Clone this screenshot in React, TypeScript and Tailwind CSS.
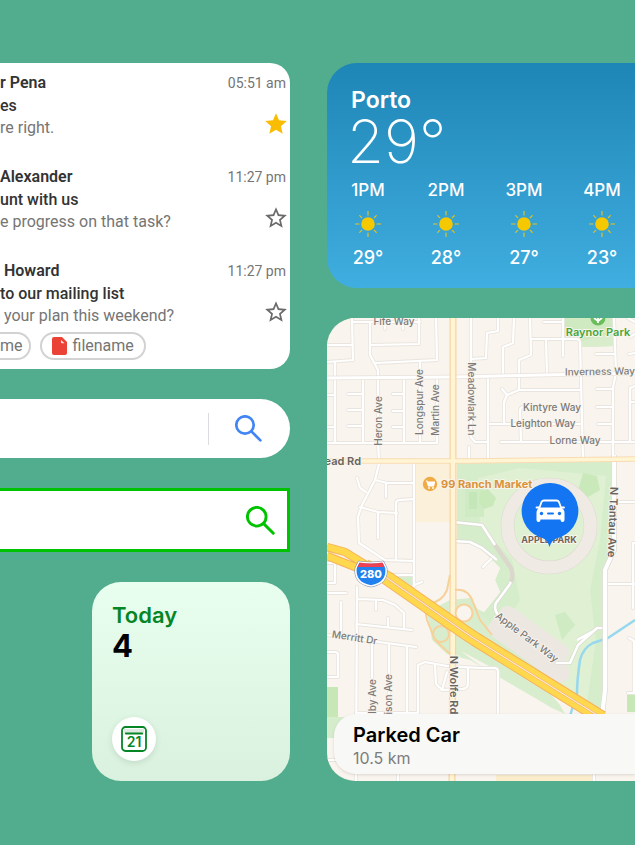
import React from 'react';

const mails = [
  { name: 'r Pena', subject: 'es', body: 're right.', time: '05:51 am', starred: true },
  { name: 'Alexander', subject: 'unt with us', body: 'e progress on that task?', time: '11:27 pm', starred: false },
  { name: '\u00a0Howard', subject: 'to our mailing list', body: '\u00a0your plan this weekend?', time: '11:27 pm', starred: false },
];

const hours = [
  { time: '1PM', temp: '29°' },
  { time: '2PM', temp: '28°' },
  { time: '3PM', temp: '27°' },
  { time: '4PM', temp: '23°' },
];

function Star({ filled }: { filled: boolean }) {
  return filled ? (
    <svg viewBox="0 0 24 24" className="size-[26px]" fill="#fbbc04">
      <path d="M12 17.27 18.18 21l-1.64-7.03L22 9.24l-7.19-.61L12 2 9.19 8.63 2 9.24l5.46 4.73L5.82 21z" />
    </svg>
  ) : (
    <svg viewBox="0 0 24 24" className="size-[26px]" fill="#6b6b6b">
      <path d="m22 9.24-7.19-.62L12 2 9.19 8.63 2 9.24l5.46 4.73L5.82 21 12 17.27 18.18 21l-1.63-7.03zM12 15.4l-3.76 2.27 1-4.28-3.32-2.88 4.38-.38L12 6.1l1.71 4.04 4.38.38-3.32 2.88 1 4.28z" />
    </svg>
  );
}

function MailCard() {
  return (
    <section className="overflow-hidden rounded-r-[20px] bg-white pt-2 pb-[9px] font-['Roboto',sans-serif] text-[#757575]">
      <ul className="flex flex-col gap-[26px]">
        {mails.map((m) => (
          <li key={m.name} className="flex justify-between whitespace-nowrap pr-1">
            <div className="text-base leading-[22px]">
              <h3 className="leading-6 font-semibold text-[#333333]">{m.name}</h3>
              <p className="font-medium text-[#333333]">{m.subject}</p>
              <p>{m.body}</p>
            </div>
            <div className="flex flex-col items-end">
              <time className="text-sm leading-6">{m.time}</time>
              <button aria-label="Star" className="-mr-[3px] mt-4">
                <Star filled={m.starred} />
              </button>
            </div>
          </li>
        ))}
      </ul>
      <div className="mt-[5px] flex gap-[9px] text-base">
        <button className="h-7 rounded-r-full border-2 border-l-0 border-[#d2d2d2] pr-[6px] leading-6">me</button>
        <button className="flex h-7 items-center gap-[6px] rounded-full border-2 border-[#d2d2d2] px-[10px] leading-6">
          <svg viewBox="0 0 15 18" className="h-[18px] w-[15px]">
            <path d="M2 0h8l5 5v11a2 2 0 0 1-2 2H2a2 2 0 0 1-2-2V2a2 2 0 0 1 2-2z" fill="#ea4335" />
            <path d="M9 3l3.500 3.200H10a1 1 0 0 1-1-1z" fill="#fff" opacity=".85" />
          </svg>
          filename
        </button>
      </div>
    </section>
  );
}

function SearchIcon({ className }: { className: string }) {
  return (
    <svg viewBox="0 0 27 27" className={className} fill="none" stroke="currentColor" strokeWidth="2.7" strokeLinecap="round">
      <circle cx="10" cy="10" r="8.7" />
      <path d="M16.4 16.4 25.4 25.4" />
    </svg>
  );
}

function TodayCard() {
  return (
    <section className="ml-[92px] flex h-[199px] flex-col items-start justify-between rounded-[29px] bg-linear-to-b from-[#e8ffef] to-[#daf1df] p-5">
      <div>
        <h2 className="text-[22px] leading-[26px] font-semibold text-[#068527]">Today</h2>
        <p className="text-[31px] leading-9 font-bold text-black">4</p>
      </div>
      <div className="flex size-11 items-center justify-center rounded-full bg-white shadow-[0_2px_6px_rgba(0,60,20,0.12)]">
        <svg viewBox="0 0 26 26" className="size-[26px]">
          <rect x="1" y="1" width="24" height="24" rx="3.5" fill="#fff" stroke="#068527" strokeWidth="1.8" />
          <path d="M3 3h20v4H3z" fill="#e0e8e2" />
          <path d="M4.8 7.5h16.4" stroke="#068527" strokeWidth="1.8" strokeLinecap="round" />
          <text x="13" y="21" textAnchor="middle" fontSize="14" fontWeight="600" fill="#068527">21</text>
        </svg>
      </div>
    </section>
  );
}

function Sun() {
  return (
    <svg viewBox="-13 -13 26 26" className="size-[26px]">
      <circle r="6.8" fill="#f5c800" />
      <path
        d="M0-12.5V-9M0 12.5V9M-12.5 0H-9M12.5 0H9M-8.3-8.3-6.3-6.3M8.3-8.3 6.3-6.3M-8.3 8.3-6.3 6.3M8.3 8.3 6.3 6.3"
        stroke="#dfc22a"
        strokeWidth="1.2"
        strokeLinecap="round"
      />
    </svg>
  );
}

function WeatherCard() {
  return (
    <section className="h-[225px] overflow-hidden rounded-l-[30px] bg-linear-to-b from-[#1d86b6] to-[#40aee0] pt-6 text-white">
      <h2 className="pl-6 text-[23px] leading-[26px] font-semibold">Porto</h2>
      <p className="pl-5 text-[60px] leading-[56px] font-extralight">29°</p>
      <ul className="mt-[9px] flex pl-[2px]">
        {hours.map((h) => (
          <li key={h.time} className="flex w-[78px] shrink-0 flex-col items-center leading-6 font-medium">
            <span className="text-[17px]">{h.time}</span>
            <span className="my-[9px]">
              <Sun />
            </span>
            <span className="text-[18px]">{h.temp}</span>
          </li>
        ))}
      </ul>
    </section>
  );
}

const streets = [
  'M352 322H420M352 318 353 360 327 362M327 345H353M370 323V355L378 370V443L379 460',
  'M370 345 419 344V318M376 363 437 360 436 318M385 322V329M403 322V329',
  'M335 362V443M363 378V443M404 378V443M420 361V442M437 378V443H327',
  'M348 394H363M348 410H363M348 426H363M393 394H404M393 411H404M393 427H404M327 395H335M327 427H335',
  'M471 318V437L475 442H487M471 359 486 358 487 333 498 331V318M469 447V460',
  'M514 318 513 343 503 347V374M530 318 531 355 519 360V390H581M531 339H576Q580 339 580 343L583 459',
  'M546 339 547 374M563 318V356M544 322H563M519 390 507 395 504 402V424M507 395 502 389',
  'M488 424H582M488 376V459M535 407H524Q520 407 520 411L521 442M501 442H635',
  'M614 318 616 373 613 387V460M596 354H615M597 389H613M597 407H613M598 424H613',
  'M635 386 630 388V441M630 402H635M629 354 635 353M630 337 635 334M628 318 635 322',
  'M414 461V586M380 460 375 480 362 505 358 517 359 543 385 560 414 561M357 478 360 488 366 492',
  'M375 480 387 483H414M386 483V497M360 507 378 512 397 513M378 512V538M414 499 400 500Q396 500 396 504V560',
  'M394 575H414M414 585 422 582M327 563H335V583H327M327 593H346M341 602V632',
  'M357 587 356 781M357 599 383 600 395 605 404 613V628M376 600V610M356 624 412 630M388 618V627',
  'M327 635 416 647M372 643V713M389 645V713M407 646V713M356 713H418',
  'M418 713V665L425 662 447 666 480 668H494Q498 668 498 672V713M435 665 436 684 442 690 462 689Q468 689 468 683V668M447 672 442 690',
  'M327 652H335Q338 652 338 655V677H327M327 760H356M398 775V781M594 775V781',
  'M618 502H635M607 584H635M635 543H633V608M629 638 634 641V693H628M483 567 494 556',
];

const mapLabel = 'fill-[#7c7b79] text-[10px] font-medium';
const mapRoadLabel = 'fill-[#68655f] text-[11px] font-semibold';

function MapDrawing() {
  return (
    <svg
      viewBox="327 318 308 463"
      preserveAspectRatio="xMinYMin slice"
      className="absolute inset-0 size-full"
      strokeLinejoin="round"
      fill="none"
    >
      <rect x="327" y="318" width="900" height="463" fill="#f9f4ed" />
      <path d="M564 318H614V346L581 347 580 341 564 338Z" fill="#cfe9c0" />
      <path d="M580 341 614 333V346L581 347Z" fill="#d9edcc" />
      <path d="M414 462H453V522H414Z" fill="#fbf1da" />
      <path d="M457 462H614V550L605 570V716L500 650 453 620 457 600 484 612 500 592 495 580 500 568 480 548 457 541Z" fill="#d6edcc" />
      <path d="M478 478 520 468 606 476 600 540 590 590 596 640 585 716 520 650 505 625 520 600 512 560 480 525Z" fill="#dff0d3" />
      <path d="M465 485H484V517H465Z" fill="#cfebc4" />
      <path d="M469 492H477V509H469Z" fill="#c5e6b8" />
      <path d="M480 492 488 489 496 498 493 506 484 509 479 503Z" fill="#c9e9bb" />
      <path d="M583 473 597 476 600 490 588 497 578 491Z" fill="#c9e9bb" />
      <path d="M555 615 565 612 575 625 562 640Z" fill="#cfebc4" />
      <path d="M457 541 470 542 480 548 500 568 495 580 500 592 484 612 457 600Z" fill="#f9f4ed" />
      <path d="M394 577 414 575V590L404 590Z" fill="#d6edcc" />
      <path d="M427 612 450 600 470 598 480 612 560 705 565 714 552 708 470 660 447 654 432 640Z" fill="#d8edcd" />
      <path d="M461 651 500 672 500 713 545 713 470 658Z" fill="#f9f4ed" />
      <path d="M327 687H338V717H327Z" fill="#c8e7b6" />
      <path d="M327 717H345V738H327Z" fill="#d6edcc" />
      <path d="M627 695H635V712H627Z" fill="#c8e7b6" />
      <path d="M496 775H592V781H496Z" fill="#fbeccb" />
      <path d="M635 620 608 638 593 643Q583 648 580 660 577 680 577 693L570 716" stroke="#97d8ef" strokeWidth="2.5" />

      <circle cx="549" cy="526" r="41.5" stroke="#ded9d0" strokeWidth="13.5" />
      <circle cx="549" cy="526" r="41.5" stroke="#efebe4" strokeWidth="12.5" />
      <path d="M497 614 503 607Q509 604 515 609L566 646Q572 651 568 657L563 663Q573 670 569 678 563 685 555 681L492 636Q485 631 490 623Z" fill="#ece8e1" />

      {streets.map((d) => (
        <path key={d} d={d} stroke="#e9e5de" strokeWidth="3.8" strokeLinecap="round" />
      ))}
      {streets.map((d) => (
        <path key={d} d={d} stroke="#ffffff" strokeWidth="2.2" strokeLinecap="round" />
      ))}
      <path d="M327 378 453 377 635 373" stroke="#e6e1da" strokeWidth="4.5" />
      <path d="M327 378 453 377 635 373" stroke="#fff" strokeWidth="3" />

      <path d="M453 522 482 525 495 545 511 568Q514 576 510 584L496 603Q493 610 500 617M453 541 470 542 482 548 497 560M556 663H570L578 645 597 628H605M577 640 592 632" stroke="#d9d8cf" strokeWidth="4" />
      <path d="M453 522 482 525 495 545 511 568Q514 576 510 584L496 603Q493 610 500 617M453 541 470 542 482 548 497 560M556 663H570L578 645 597 628H605M577 640 592 632" stroke="#fff" strokeWidth="2.6" />
      <path d="M495 545 511 568Q514 576 511 582" stroke="#dcd7cd" strokeWidth="4" />
      <path d="M614 455V550L605 570V690L602 716" stroke="#dedad2" strokeWidth="5.5" />
      <path d="M614 455V550L605 570V690L602 716" stroke="#fff" strokeWidth="4.2" />

      <path d="M327 461 470 461 635 459" stroke="#f8dbb4" strokeWidth="5.5" />
      <path d="M453 318V590L452 781" stroke="#f8d3a4" strokeWidth="7" />
      <path d="M327 461 470 461 635 459" stroke="#fff5d2" strokeWidth="3.5" />
      <path d="M453 318V590L452 781" stroke="#fff5d2" strokeWidth="4.5" />

      <g stroke="#f6d199" strokeWidth="2">
        <path d="M450 575 447 590Q442 602 430 603L424 602 427 620 435 640 450 654M455 590Q468 588 473 602L480 620 492 635" />
        <circle cx="441" cy="634" r="8" />
        <circle cx="464" cy="613" r="8.5" fill="#f9f4ed" />
      </g>

      <path d="M327 547 345 552 371 568M327 556 350 565 387 579" stroke="#f6b25c" strokeWidth="8.5" />
      <path d="M327 547 345 552 371 568M327 556 350 565 387 579" stroke="#ffd84e" strokeWidth="6.5" />
      <path d="M365 566 387 578 463 631 475 639 602 718" stroke="#f6b25c" strokeWidth="14.5" />
      <path d="M365 566 387 578 463 631 475 639 602 718" stroke="#ffd84e" strokeWidth="12.5" />
      <path d="M365 566 387 578 463 631 475 639 602 718" stroke="#f4b877" strokeWidth="2.2" />
      <path d="M365 566 387 578 463 631 475 639 602 718" stroke="#fdf1e4" strokeWidth="1" />

      <g>
        <path d="M359 562Q370 564 383 562L386 568Q388 583 371 586 354 583 356 568Z" fill="#2a83ec" stroke="#7588a8" strokeWidth="2.5" />
        <path d="M359 562Q370 564 383 562L386 568Q388 583 371 586 354 583 356 568Z" fill="#2181ee" stroke="#fff" strokeWidth="1.5" />
        <path d="M359.5 562.5Q371 564.5 382.5 562.5L384.5 567H357.5Z" fill="#ec4253" />
        <text x="371" y="578" textAnchor="middle" className="fill-white text-[11px] font-extrabold">280</text>
      </g>

      <g textAnchor="middle" stroke="#f9f4ed" strokeWidth="2" paintOrder="stroke">
        <text x="394" y="325" className={mapLabel}>Fife Way</text>
        <text x="600" y="375" transform="rotate(-1 600 372)" className={mapLabel}>Inverness Way</text>
        <text x="552" y="411" className={mapLabel}>Kintyre Way</text>
        <text x="543" y="427" className={mapLabel}>Leighton Way</text>
        <text x="575" y="444" className={mapLabel}>Lorne Way</text>
        <text transform="translate(382 421) rotate(-90)" className={mapLabel}>Heron Ave</text>
        <text transform="translate(423 402) rotate(-90)" className={mapLabel}>Longspur Ave</text>
        <text transform="translate(439 410) rotate(-90)" className={mapLabel}>Martin Ave</text>
        <text transform="translate(468 399) rotate(90)" className={mapLabel}>Meadowlark Ln</text>
        <text transform="translate(354 641) rotate(9)" className={mapLabel}>Merritt Dr</text>
        <text transform="translate(376 679) rotate(-90)" textAnchor="end" className={mapLabel}>Selby Ave</text>
        <text transform="translate(392 674) rotate(-90)" textAnchor="end" className={mapLabel}>Madison Ave</text>
        <text transform="translate(525 640) rotate(37)" className={mapLabel}>Apple Park Way</text>
        <text transform="translate(450 685) rotate(90)" className={mapRoadLabel}>N Wolfe Rd</text>
        <text transform="translate(609 522) rotate(92)" className={mapRoadLabel}>N Tantau Ave</text>
        <text x="361" y="465" textAnchor="end" className={mapRoadLabel}>Homestead Rd</text>
        <text x="598" y="336" className="fill-[#48a63c] text-[11px] font-semibold">Raynor Park</text>
        <text x="549" y="543" className="fill-[#6f6459] text-[9px] font-bold">APPLE PARK</text>
        <text x="441" y="488" textAnchor="start" className="fill-[#d8933b] text-[11px] font-bold">99 Ranch Market</text>
      </g>

      <circle cx="598" cy="318" r="7.5" fill="#6cbd5c" />
      <path d="M598 312V323M594 318 598 321 602 318" stroke="#fff" strokeWidth="1.8" />

      <circle cx="430" cy="484" r="7.2" fill="#f0ab45" />
      <path d="M426 481H427L428.500 486H433.500L434.500 482H428" stroke="#fff" strokeWidth="1.2" fill="#fff" />
      <circle cx="429" cy="488" r="1" fill="#fff" />
      <circle cx="433" cy="488" r="1" fill="#fff" />

      <path d="M550 483A28 28 0 0 1 557 538.2Q551.5 540 549.5 547 547.5 540 543 538.2A28 28 0 0 1 550 483Z" fill="#1475f2" />
      <path d="M539 509 541.5 502Q542.3 500.5 544 500.5H556.5Q558.3 500.5 559 502L561.5 509" stroke="#fff" strokeWidth="1.8" />
      <path d="M536.5 507.5H539M561.5 507.5H564" stroke="#fff" strokeWidth="1.8" strokeLinecap="round" />
      <path d="M540.5 507.5H560Q564.5 508.5 564.5 513V520Q564.5 522 562.5 522 560.5 522 560.5 519.5H540.5Q540.5 522 538.5 522 536.5 522 536.5 520V513Q536.5 508.5 540.5 507.5Z" fill="#fff" />
      <circle cx="541.5" cy="513.5" r="1.7" fill="#1475f2" />
      <circle cx="559.5" cy="513.5" r="1.7" fill="#1475f2" />
      <path d="M548 513.5H553" stroke="#1475f2" strokeWidth="2" strokeLinecap="round" />
    </svg>
  );
}

function MapCard() {
  return (
    <section className="relative flex h-[463px] flex-col justify-end overflow-hidden rounded-l-[28px] pb-[7px] pl-[7px]">
      <MapDrawing />
      <div className="relative rounded-l-[22px] bg-[#f8f8f6] pt-[9px] pb-[5px] pl-[19px] shadow-[0_1px_3px_rgba(0,0,0,0.12)]">
        <h2 className="text-xl leading-6 font-semibold text-black">Parked Car</h2>
        <p className="text-base leading-[22px] text-[#7d7d7d]">10.5 km</p>
      </div>
    </section>
  );
}

export default function App() {
  return (
    <main className="flex min-h-screen items-start gap-[37px] overflow-hidden bg-[#52ad8e] pt-[63px] pb-16 font-['Inter',sans-serif]">
      <div className="flex w-[290px] shrink-0 flex-col gap-[30px]">
        <MailCard />
        <form className="flex h-[59px] items-center rounded-r-full bg-white pr-[28px]">
          <input aria-label="Search the web" className="min-w-0 flex-1 bg-transparent outline-none" />
          <div className="mr-[26px] h-8 w-px bg-[#dadce0]" />
          <button type="button" aria-label="Search" className="text-[#4285f4]">
            <SearchIcon className="size-[27px]" />
          </button>
        </form>
        <form className="flex h-16 items-center border-[3px] border-l-0 border-[#00c300] bg-white pr-3">
          <input aria-label="Search the portal" className="min-w-0 flex-1 bg-transparent outline-none" />
          <button type="button" aria-label="Search" className="text-[#00c300]">
            <SearchIcon className="size-[29px]" />
          </button>
        </form>
        <TodayCard />
      </div>
      <div className="flex min-w-0 flex-1 flex-col gap-[30px]">
        <WeatherCard />
        <MapCard />
      </div>
    </main>
  );
}
